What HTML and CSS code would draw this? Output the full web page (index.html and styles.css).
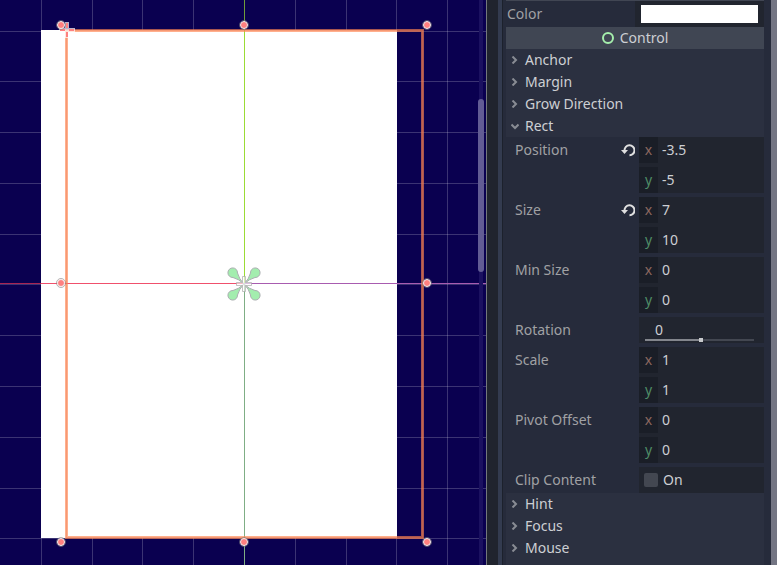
FILE: index.html
```
<!DOCTYPE html>
<html lang="en">
<head>
  <meta charset="UTF-8" />
  <meta name="viewport" content="width=device-width, initial-scale=1.0"/>
  <title>Inspector</title>
  <link rel="stylesheet" href="styles.css">
</head>

<body>

  <!-- 2D VIEWPORT -->
  <main class="viewport">
    <svg class="scene" viewBox="0 0 486 565" preserveAspectRatio="xMidYMid slice" role="img" aria-label="2D scene">
      <rect width="486" height="565" fill="#0a0050"/>

      <!-- GRID -->
      <path class="grid" d="M41.5 0V565M92.5 0V565M142.5 0V565M193.5 0V565M295.5 0V565M346.5 0V565M396.5 0V565M447.5 0V565
        M0 31.500H486M0 81.500H486M0 132.500H486M0 183.500H486M0 234.500H486M0 335.500H486M0 386.500H486M0 437.500H486M0 488.500H486M0 538.500H486"/>

      <!-- COLOR RECT -->
      <rect x="41" y="30" width="356" height="508" fill="#fff"/>

      <!-- AXES -->
      <path d="M244.500 0V30" stroke="#6f9c3c"/>
      <path d="M244.500 30V283" stroke="#9bdc35"/>
      <path d="M244.500 283V565" stroke="#7fae85"/>
      <path d="M0 283.500H41" stroke="#a82452"/>
      <path d="M41 283.500H244" stroke="#f0506c"/>
      <path d="M244 283.500H486" stroke="#a85cb0"/>
      <path d="M0 284.500H41M397 284.500H486" stroke="#fff" stroke-opacity=".2"/>

      <!-- SELECTION -->
      <rect class="select-wide" x="66.500" y="30.500" width="356" height="507"/>
      <rect class="select-thin" x="66.500" y="30.500" width="356" height="507"/>

      <!-- ANCHORS -->
      <g fill="#a3edae" stroke="#aaaeb0">
        <path d="M244 284Q239 279 237.500 273A4.800 4.800 0 1 0 233 277.500Q239 279 244 284Z"/>
        <path d="M244 284Q249 279 250.500 273A4.800 4.800 0 1 1 255 277.500Q249 279 244 284Z"/>
        <path d="M244 284Q239 289 237.500 295A4.800 4.800 0 1 1 233 290.500Q239 289 244 284Z"/>
        <path d="M244 284Q249 289 250.500 295A4.800 4.800 0 1 0 255 290.500Q249 289 244 284Z"/>
      </g>
      <path d="M242.500 276.500h3v6h6v3h-6v6h-3v-6h-6v-3h6z" fill="#fff" fill-opacity=".6" stroke="#aaa" stroke-opacity=".7"/>

      <!-- PIVOT -->
      <path d="M65 22H69V28H75V32H69V38H65V32H59V28H65Z" fill="#fff" fill-opacity=".7"/>
      <path d="M67 23V28M60 30H65M69 30H74M67 32V37" stroke="#ff8080" stroke-width="2"/>

      <!-- HANDLES -->
      <g class="handle-edge">
        <circle cx="61" cy="25" r="4.500"/>
        <circle cx="244" cy="25" r="4.500"/>
        <circle cx="427" cy="25" r="4.500"/>
        <circle cx="61" cy="283" r="4.500"/>
        <circle cx="427" cy="283" r="4.500"/>
        <circle cx="61" cy="542" r="4.500"/>
        <circle cx="244" cy="542" r="4.500"/>
        <circle cx="427" cy="542" r="4.500"/>
      </g>
      <g class="handles">
        <circle cx="61" cy="25" r="3.500"/>
        <circle cx="244" cy="25" r="3.500"/>
        <circle cx="427" cy="25" r="3.500"/>
        <circle cx="61" cy="283" r="3.500"/>
        <circle cx="427" cy="283" r="3.500"/>
        <circle cx="61" cy="542" r="3.500"/>
        <circle cx="244" cy="542" r="3.500"/>
        <circle cx="427" cy="542" r="3.500"/>
      </g>
    </svg>
    <div class="v-scroll"><div class="grabber"></div></div>
  </main>

  <!-- SPLITTER -->
  <div class="splitter"></div>

  <!-- INSPECTOR -->
  <aside class="inspector">
    <div class="properties">
      <div class="row color-row">
        <label for="color">Color</label>
        <div class="field"><input type="color" id="color" value="#ffffff"></div>
      </div>

      <h2 class="category">
        <svg width="12" height="12" viewBox="0 0 12 12"><circle cx="6" cy="6" r="5" fill="none" stroke="#a5efac" stroke-width="2"/></svg>
        Control
      </h2>

      <button class="fold"><svg viewBox="0 0 8 8"><path d="M1.500 0.500L5 4L1.500 7.500"/></svg>Anchor</button>
      <button class="fold"><svg viewBox="0 0 8 8"><path d="M1.500 0.500L5 4L1.500 7.500"/></svg>Margin</button>
      <button class="fold"><svg viewBox="0 0 8 8"><path d="M1.500 0.500L5 4L1.500 7.500"/></svg>Grow Direction</button>
      <button class="fold"><svg viewBox="0 0 8 8"><path d="M0.500 2.500L4 6L7.500 2.500"/></svg>Rect</button>

      <!-- RECT -->
      <div class="section">
        <div class="row">
          <label for="pos-x">Position</label>
          <button class="reset" aria-label="Reset position"><svg viewBox="0 0 14 14"><path class="arc" d="M3.500 7.500a5 5 0 1 1 5 4.800"/><path class="tip" d="M0 7h7L3.500 11z"/></svg></button>
          <div class="field vector">
            <div class="axis"><label class="x" for="pos-x">x</label><input type="text" id="pos-x" value="-3.5"></div>
            <div class="axis"><label class="y" for="pos-y">y</label><input type="text" id="pos-y" value="-5"></div>
          </div>
        </div>
        <div class="row">
          <label for="size-x">Size</label>
          <button class="reset" aria-label="Reset size"><svg viewBox="0 0 14 14"><path class="arc" d="M3.500 7.500a5 5 0 1 1 5 4.800"/><path class="tip" d="M0 7h7L3.500 11z"/></svg></button>
          <div class="field vector">
            <div class="axis"><label class="x" for="size-x">x</label><input type="text" id="size-x" value="7"></div>
            <div class="axis"><label class="y" for="size-y">y</label><input type="text" id="size-y" value="10"></div>
          </div>
        </div>
        <div class="row">
          <label for="min-x">Min Size</label>
          <div class="field vector">
            <div class="axis"><label class="x" for="min-x">x</label><input type="text" id="min-x" value="0"></div>
            <div class="axis"><label class="y" for="min-y">y</label><input type="text" id="min-y" value="0"></div>
          </div>
        </div>
        <div class="row">
          <label for="rotation">Rotation</label>
          <div class="field spin">
            <input type="text" id="rotation" value="0">
            <input type="range" aria-label="Rotation" min="-360" max="360" value="10">
          </div>
        </div>
        <div class="row">
          <label for="scale-x">Scale</label>
          <div class="field vector">
            <div class="axis"><label class="x" for="scale-x">x</label><input type="text" id="scale-x" value="1"></div>
            <div class="axis"><label class="y" for="scale-y">y</label><input type="text" id="scale-y" value="1"></div>
          </div>
        </div>
        <div class="row">
          <label for="pivot-x">Pivot Offset</label>
          <div class="field vector">
            <div class="axis"><label class="x" for="pivot-x">x</label><input type="text" id="pivot-x" value="0"></div>
            <div class="axis"><label class="y" for="pivot-y">y</label><input type="text" id="pivot-y" value="0"></div>
          </div>
        </div>
        <div class="row">
          <label for="clip">Clip Content</label>
          <div class="field check"><input type="checkbox" id="clip"><label for="clip">On</label></div>
        </div>
      </div>

      <button class="fold"><svg viewBox="0 0 8 8"><path d="M1.500 0.500L5 4L1.500 7.500"/></svg>Hint</button>
      <button class="fold"><svg viewBox="0 0 8 8"><path d="M1.500 0.500L5 4L1.500 7.500"/></svg>Focus</button>
      <button class="fold"><svg viewBox="0 0 8 8"><path d="M1.500 0.500L5 4L1.500 7.500"/></svg>Mouse</button>
      <div class="fold-rest"></div>
    </div>
    <div class="panel-scroll"></div>
  </aside>

</body>
</html>
```
FILE: styles.css
```
* {
  box-sizing: border-box;
}

body {
  display: flex;
  height: 100vh;
  margin: 0;
  overflow: hidden;
  background-color: #262b3b;
  color: #cdcfd3;
  font-family: "Noto Sans", sans-serif;
  font-size: 14px;
  line-height: 22px;
}

button,
input {
  margin: 0;
  padding: 0;
  border: none;
  background: none;
  color: inherit;
  font: inherit;
}

/* VIEWPORT */
.viewport {
  flex: 1;
  position: relative;
  min-width: 0;
  border-right: 1px solid #74787c;
}

.scene {
  display: block;
  width: 100%;
  height: 100%;
}

.grid {
  fill: none;
  stroke: #ffffff;
  stroke-opacity: 0.2;
}

.select-wide,
.select-thin {
  fill: none;
  stroke: #ff8450;
  stroke-opacity: 0.65;
  stroke-width: 3;
}

.select-thin {
  stroke: #e87850;
  stroke-opacity: 0.4;
  stroke-width: 1;
}

.handles {
  fill: #ff8080;
  stroke: #f4f0f0;
  stroke-width: 1;
}

.handle-edge {
  fill: none;
  stroke: #808080;
  stroke-opacity: 0.6;
}

/* scrollbar over the scene */
.v-scroll {
  position: absolute;
  top: 0;
  right: 2px;
  bottom: 0;
  width: 6px;
  padding-top: 99px;
  background: linear-gradient(#1b1160, #1b1160) center / 4px 100% no-repeat;
}

.grabber {
  height: 173px;
  border-radius: 3px;
  background-color: #625c94;
}

/* SPLITTER */
.splitter {
  width: 16px;
  border-right: 1px solid #1c212c;
  border-left: 11px solid #20242e;
  background-color: #333b4f;
}

/* INSPECTOR */
.inspector {
  display: flex;
  width: 274px;
  padding-left: 3px;
}

.properties {
  display: flex;
  flex: 1;
  flex-direction: column;
  margin-right: 7px;
  border-top: 1px solid #414653;
}

.row {
  display: flex;
  align-items: flex-start;
  padding-left: 9px;
}

.row > label {
  flex: 1;
  color: #a0a1a4;
  line-height: 26px;
}

.field {
  width: 125px;
  min-height: 26px;
  background-color: #21252f;
}

.color-row {
  padding-left: 1px;
}

.color-row .field {
  width: 129px;
  padding: 4px 6px;
}

input[type="color"] {
  display: block;
  width: 100%;
  height: 18px;
}

input[type="color"]::-webkit-color-swatch-wrapper {
  padding: 0;
}

input[type="color"]::-webkit-color-swatch {
  border: none;
}

.category {
  display: flex;
  align-items: center;
  justify-content: center;
  gap: 6px;
  height: 22px;
  margin: 0;
  background-color: #404653;
  font-size: 14px;
  font-weight: normal;
}

.fold {
  display: flex;
  flex: none;
  align-items: center;
  gap: 6px;
  height: 22px;
  padding-left: 5px;
  background-color: #2b3040;
}

.fold svg {
  width: 8px;
  height: 8px;
  fill: none;
  stroke: #898c94;
  stroke-width: 2;
}

.fold-rest {
  flex: 1;
  background-color: #2b3040;
}

/* RECT SECTION */
.section {
  display: flex;
  flex-direction: column;
  gap: 4px;
}

.reset {
  display: flex;
  align-items: center;
  height: 26px;
  margin-right: 4px;
}

.reset svg {
  width: 14px;
  height: 14px;
}

.arc {
  fill: none;
  stroke: #e0e0e0;
  stroke-width: 2;
}

.tip {
  fill: #e0e0e0;
}

.vector {
  display: flex;
  flex-direction: column;
  gap: 4px;
}

.axis {
  display: flex;
  height: 26px;
  line-height: 26px;
}

.axis label {
  width: 19px;
  background-color: #1a1e27;
  text-align: center;
}

.axis .x {
  color: #8c675f;
}

.axis .y {
  color: #4f8c66;
}

.axis input {
  flex: 1;
  min-width: 0;
  padding-left: 4px;
}

.spin {
  display: flex;
  flex-direction: column;
  padding: 1px 10px 0 6px;
}

.spin input[type="text"] {
  width: 100%;
  height: 20px;
  padding: 3px 0 0 10px;
}

/* value slider under the number */
input[type="range"] {
  width: 100%;
  height: 4px;
  appearance: none;
  background: linear-gradient(#83868d, #83868d) 0 1px / 52% 2px no-repeat,
    linear-gradient(#434751, #434751) 0 1px / 100% 2px no-repeat;
}

input[type="range"]::-webkit-slider-thumb {
  width: 4px;
  height: 4px;
  appearance: none;
  background-color: #c8cacd;
}

.check {
  display: flex;
  align-items: center;
  gap: 5px;
  padding-left: 5px;
}

input[type="checkbox"] {
  width: 14px;
  height: 14px;
  appearance: none;
  border-radius: 2px;
  background-color: #434751;
}

.panel-scroll {
  width: 6px;
  background-color: #737583;
}
```
